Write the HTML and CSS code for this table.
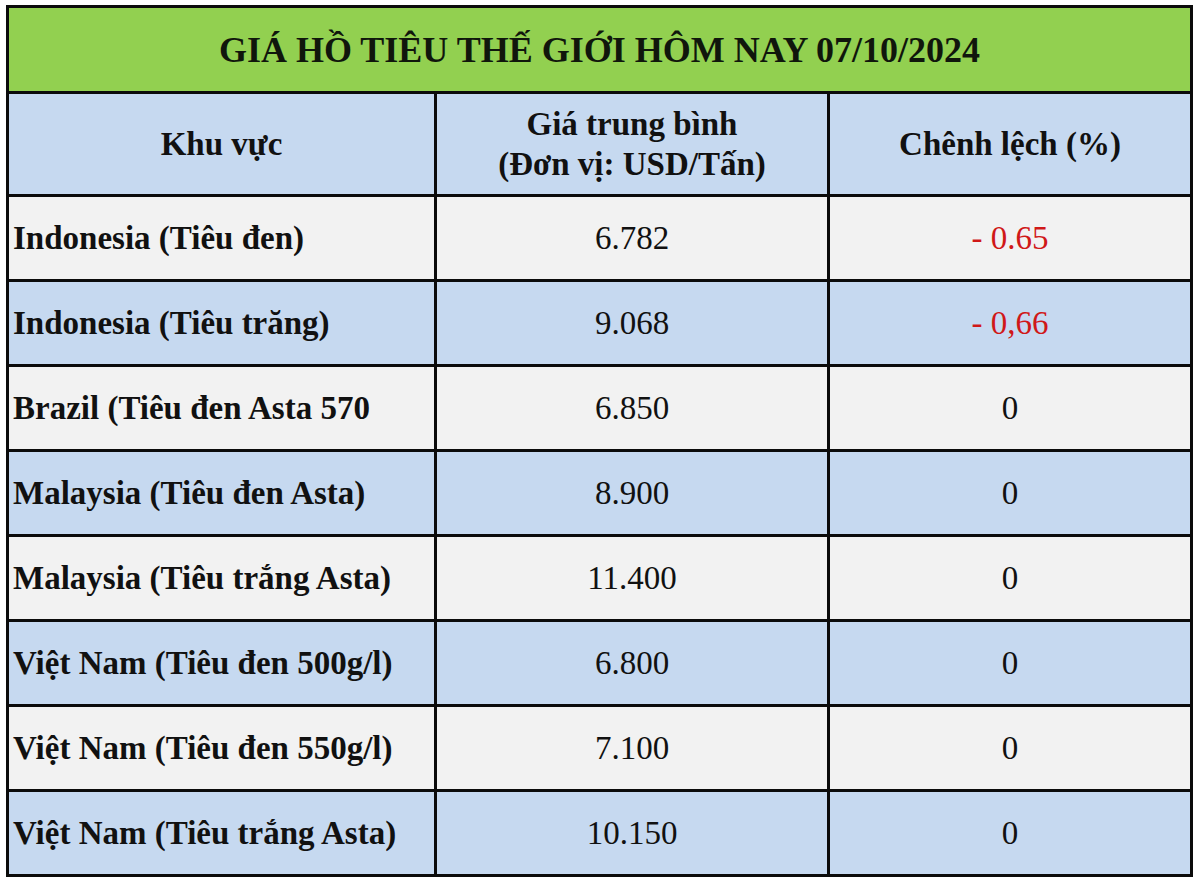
FILE: index.html
```html
<!DOCTYPE html>
<html lang="vi">
<head>
<meta charset="utf-8">
<title>Giá hồ tiêu thế giới</title>
<link rel="stylesheet" href="styles.css">
</head>
<body>
<div class="wrap">
<table class="price">
  <colgroup>
    <col class="c1"><col class="c2"><col class="c3">
  </colgroup>
  <tr class="title"><td colspan="3">GIÁ HỒ TIÊU THẾ GIỚI HÔM NAY 07/10/2024</td></tr>
  <tr class="head">
    <td>Khu vực</td>
    <td>Giá trung bình<br>(Đơn vị: USD/Tấn)</td>
    <td>Chênh lệch (%)</td>
  </tr>
  <tr class="gray"><td class="name">Indonesia (Tiêu đen)</td><td>6.782</td><td class="neg">- 0.65</td></tr>
  <tr class="blue"><td class="name">Indonesia (Tiêu trăng)</td><td>9.068</td><td class="neg">- 0,66</td></tr>
  <tr class="gray"><td class="name">Brazil (Tiêu đen Asta 570</td><td>6.850</td><td>0</td></tr>
  <tr class="blue"><td class="name">Malaysia (Tiêu đen Asta)</td><td>8.900</td><td>0</td></tr>
  <tr class="gray"><td class="name">Malaysia (Tiêu trắng Asta)</td><td>11.400</td><td>0</td></tr>
  <tr class="blue"><td class="name">Việt Nam (Tiêu đen 500g/l)</td><td>6.800</td><td>0</td></tr>
  <tr class="gray"><td class="name">Việt Nam (Tiêu đen 550g/l)</td><td>7.100</td><td>0</td></tr>
  <tr class="blue"><td class="name">Việt Nam (Tiêu trắng Asta)</td><td>10.150</td><td>0</td></tr>
</table>
</div>
</body>
</html>
```
FILE: styles.css
```css
html, body {
  margin: 0;
  padding: 0;
  background: #ffffff;
}
.wrap {
  padding: 5px 0 0 6px;
}
.price {
  border-collapse: collapse;
  width: 1184px;
  font-family: "Liberation Serif", "Times New Roman", serif;
  font-size: 33px;
  color: #111;
  table-layout: fixed;
}
.c1 { width: 428px; }
.c2 { width: 393px; }
.c3 { width: 363px; }
.price td {
  border: 3px solid #0b0b0b;
  text-align: center;
  vertical-align: middle;
  padding: 0 4px;
  height: 82px;
  line-height: 40px;
}
.title td {
  background: #92d050;
  font-weight: bold;
  font-size: 36px;
  height: 83px;
  color: #10160c;
}
.head td {
  background: #c6d9f0;
  font-weight: bold;
  height: 100px;
}
.gray td { background: #f2f2f2; }
.blue td { background: #c6d9f0; }
.price td.name {
  text-align: left;
  font-weight: bold;
  padding-left: 4px;
}
.price td.neg {
  color: #d01818;
}
```
